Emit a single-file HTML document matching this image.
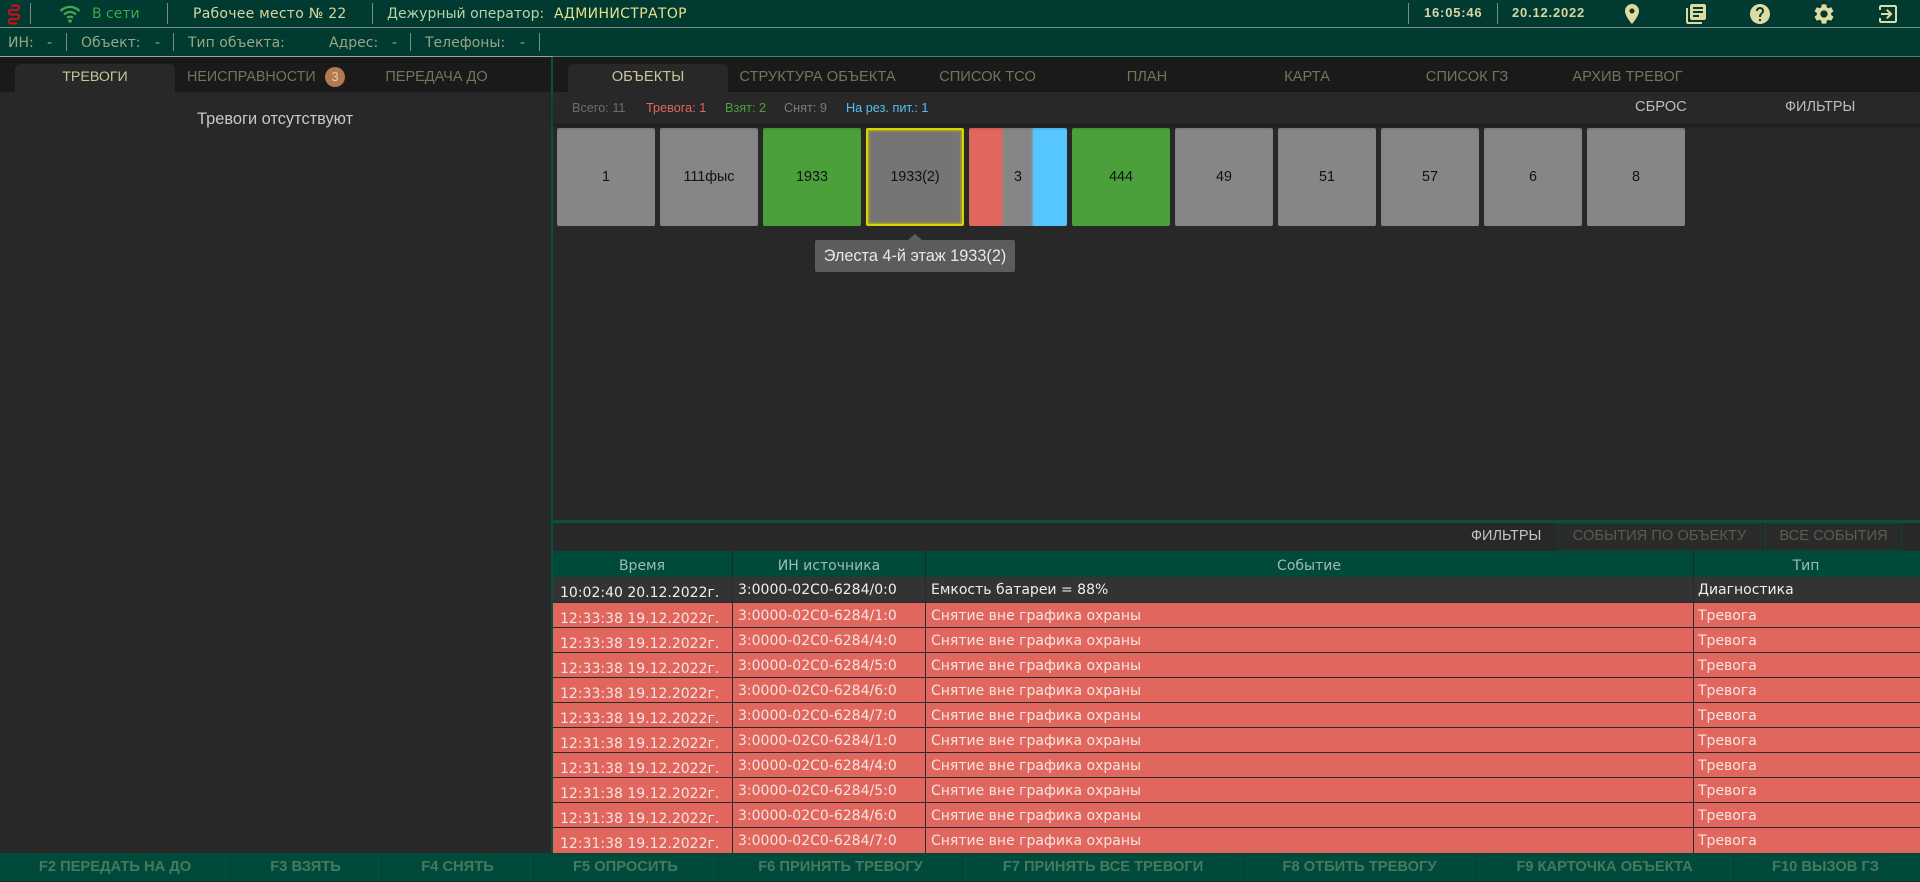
<!DOCTYPE html>
<html lang="ru"><head><meta charset="utf-8"><title>Пульт</title>
<style>
*{box-sizing:border-box}
html,body{margin:0;padding:0;width:1920px;height:882px;overflow:hidden;background:#282828;font-family:"Liberation Sans",sans-serif}
.a{position:absolute;white-space:nowrap}
.c{position:absolute;white-space:nowrap;transform:translateX(-50%)}
.b{position:absolute}
.d{font-family:"DejaVu Sans",sans-serif;font-size:14px}
.sep{position:absolute;width:1px;background:#7f8a80}
.t1{top:3px;height:21px}.t2{top:33px;height:18px}
.h{top:4px;line-height:20px;color:#d8d6a2}
.r2{top:34px;line-height:18px;color:#98a684}
.tab{top:65px;line-height:25px;font-size:14.700px;color:#77735a;height:27px}
.tile{position:absolute;top:128px;width:98px;height:98px;background:#868686;border-radius:2px;color:#111;font-size:14.300px;line-height:99px;text-align:center;box-shadow:inset 0 2px 2px -1px rgba(0,0,0,.15)}
.g{background:#4ca03c}
.st{top:101px;font-size:12.700px;line-height:14px}
.row{position:absolute;left:553px;width:1367px;height:25px;background:#e0665e;border-bottom:1px solid #2a2a2a;color:#f6e4e0}
.row span{position:absolute;white-space:nowrap;line-height:24px;top:1px}
.row .t{left:7px;top:4px}.row .i{left:185px}.row .e{left:378px}.row .y{left:1145px}
.row i{position:absolute;top:0;bottom:-1px;width:1px;background:#2a2a2a}
.fk{position:absolute;top:854px;height:27px;line-height:27px;font-size:14.700px;font-weight:bold;color:#457a5f;white-space:nowrap;transform:translateX(-50%)}
.fs{position:absolute;top:853px;width:1px;height:28px;background:#003f32}
</style></head><body>
<!-- top bars -->
<div class="b" style="left:0;top:0;width:1920px;height:27px;background:#003a30"></div>
<div class="b" style="left:0;top:27px;width:1920px;height:1px;background:#7f8f84"></div>
<div class="b" style="left:0;top:28px;width:1920px;height:28px;background:#003a30"></div>
<div class="b" style="left:0;top:56px;width:1920px;height:1px;background:#9aa5a0"></div>
<svg class="b" style="left:7px;top:2px" width="14" height="24" viewBox="0 0 14 24"><path d="M4 3.500h6c2.700 0 2.700 4.500 0 4.500H4c-2.700 0-2.700 4.500 0 4.500h6c2.700 0 2.700 4.500 0 4.500H4c-2.700 0-2.700 4.500 0 4.500h6" fill="none" stroke="#c4121c" stroke-width="2.200"/></svg>
<div class="sep t1" style="left:30px"></div>
<svg class="b" style="left:58px;top:3px" width="24" height="20" viewBox="0 0 24 20"><path d="M2.500 8C8 2.500 16 2.500 21.500 8M6 11.500c3.500-3.300 8.500-3.300 12 0M9 14.800c1.800-1.500 4.200-1.500 6 0" fill="none" stroke="#45a84e" stroke-width="2.300"/><circle cx="12" cy="18" r="1.800" fill="#45a84e"/></svg>
<div class="a d h" style="left:92px;color:#3fa64a">В сети</div>
<div class="sep t1" style="left:167px"></div>
<div class="a d h" style="left:193px;letter-spacing:.25px">Рабочее место № 22</div>
<div class="sep t1" style="left:372px"></div>
<div class="a d h" style="left:387px;color:#b9d2a8">Дежурный оператор:</div>
<div class="a d h" style="left:554px;color:#e6e08c;letter-spacing:.35px">АДМИНИСТРАТОР</div>
<div class="sep t1" style="left:1408px"></div>
<div class="a h" style="left:1424px;top:3px;font:bold 13px/19px 'Liberation Sans',sans-serif;letter-spacing:.8px;color:#d8d6a2">16:05:46</div>
<div class="sep t1" style="left:1497px"></div>
<div class="a h" style="left:1512px;top:3px;font:bold 13px/19px 'Liberation Sans',sans-serif;letter-spacing:.8px;color:#d8d6a2">20.12.2022</div>
<svg class="b" style="left:1620px;top:2px" width="24" height="24" viewBox="0 0 24 24" fill="#dfdba0"><path d="M12 2C8.130 2 5 5.130 5 9c0 5.250 7 13 7 13s7-7.750 7-13c0-3.870-3.130-7-7-7zm0 9.500c-1.380 0-2.500-1.120-2.500-2.500s1.120-2.500 2.500-2.500 2.500 1.120 2.500 2.500-1.120 2.500-2.500 2.500z"/></svg>
<svg class="b" style="left:1684px;top:2px" width="24" height="24" viewBox="0 0 24 24" fill="#dfdba0"><path d="M4 6H2v14c0 1.100.9 2 2 2h14v-2H4V6zm16-4H8c-1.100 0-2 .9-2 2v12c0 1.100.9 2 2 2h12c1.100 0 2-.9 2-2V4c0-1.100-.9-2-2-2zm-1 9H9V9h10v2zm-4 4H9v-2h6v2zm4-8H9V5h10v2z"/></svg>
<svg class="b" style="left:1748px;top:2px" width="24" height="24" viewBox="0 0 24 24" fill="#dfdba0"><path d="M12 2C6.480 2 2 6.480 2 12s4.480 10 10 10 10-4.480 10-10S17.520 2 12 2zm1 17h-2v-2h2v2zm2.070-7.750l-.9.920C13.450 12.900 13 13.500 13 15h-2v-.5c0-1.100.45-2.100 1.170-2.830l1.240-1.260c.37-.36.59-.86.59-1.410 0-1.100-.9-2-2-2s-2 .9-2 2H8c0-2.210 1.790-4 4-4s4 1.790 4 4c0 .88-.36 1.680-.93 2.250z"/></svg>
<svg class="b" style="left:1812px;top:2px" width="24" height="24" viewBox="0 0 24 24" fill="#dfdba0"><path d="M19.140 12.940c.04-.3.060-.61.060-.94 0-.32-.02-.64-.07-.94l2.030-1.580c.18-.14.23-.41.12-.61l-1.920-3.320c-.12-.22-.37-.29-.59-.22l-2.390.96c-.5-.38-1.030-.7-1.620-.94l-.36-2.540c-.04-.24-.24-.41-.48-.41h-3.840c-.24 0-.43.17-.47.41l-.36 2.540c-.59.24-1.130.57-1.620.94l-2.390-.96c-.22-.08-.47 0-.59.22L2.740 8.870c-.12.21-.08.47.12.61l2.030 1.580c-.05.3-.09.63-.09.94s.02.64.07.94l-2.030 1.580c-.18.14-.23.41-.12.61l1.920 3.320c.12.22.37.29.59.22l2.390-.96c.5.38 1.030.7 1.620.94l.36 2.540c.05.24.24.41.48.41h3.840c.24 0 .44-.17.47-.41l.36-2.540c.59-.24 1.130-.56 1.620-.94l2.390.96c.22.08.47 0 .59-.22l1.920-3.320c.12-.22.07-.47-.12-.61l-2.010-1.580zM12 15.600c-1.980 0-3.600-1.620-3.600-3.600s1.620-3.600 3.600-3.600 3.600 1.620 3.600 3.600-1.620 3.600-3.600 3.600z"/></svg>
<svg class="b" style="left:1876px;top:2px" width="24" height="24" viewBox="0 0 24 24" fill="#dfdba0"><path d="M10.090 15.590L11.500 17l5-5-5-5-1.410 1.410L12.670 11H5v2h7.670l-2.580 2.590zM19 3H5c-1.110 0-2 .9-2 2v3h2V5h14v14H5v-3H3v3c0 1.100.89 2 2 2h14c1.100 0 2-.9 2-2V5c0-1.100-.9-2-2-2z"/></svg>
<!-- row 2 -->
<div class="a d r2" style="left:8px">ИН:</div><div class="a d r2" style="left:47px">-</div><div class="sep t2" style="left:66px"></div>
<div class="a d r2" style="left:81px">Объект:</div><div class="a d r2" style="left:155px">-</div><div class="sep t2" style="left:173px"></div>
<div class="a d r2" style="left:188px">Тип объекта:</div>
<div class="a d r2" style="left:329px">Адрес:</div><div class="a d r2" style="left:392px">-</div><div class="sep t2" style="left:410px"></div>
<div class="a d r2" style="left:425px">Телефоны:</div><div class="a d r2" style="left:520px">-</div><div class="sep t2" style="left:539px"></div>
<!-- tab strips -->
<div class="b" style="left:0;top:57px;width:1920px;height:35px;background:#1a1a1a"></div>
<div class="b" style="left:0;top:92px;width:551px;height:761px;background:#282828"></div>
<div class="b" style="left:551px;top:57px;width:2px;height:796px;background:#07513f"></div>
<div class="b" style="left:553px;top:56px;width:1367px;height:1px;background:#3f8a78"></div>
<div class="b" style="left:15px;top:64px;width:160px;height:28px;background:#282828;border-radius:6px 6px 0 0"></div>
<div class="b" style="left:568px;top:64px;width:160px;height:28px;background:#282828;border-radius:6px 6px 0 0"></div>
<div class="c tab" style="left:95px;color:#c9c59a;font-size:14.200px">ТРЕВОГИ</div>
<div class="a tab" style="left:187px;font-size:14.300px">НЕИСПРАВНОСТИ</div>
<div class="b" style="left:325px;top:67px;width:20px;height:20px;border-radius:50%;background:#b5794e;color:#e4cfae;font-size:13px;line-height:20px;text-align:center">3</div>
<div class="c tab" style="left:436.500px;font-size:14.500px">ПЕРЕДАЧА ДО</div>
<div class="a" style="left:197px;top:110px;font-size:16.400px;line-height:19px;color:#c8c8c8">Тревоги отсутствуют</div>
<div class="c tab" style="left:648px;color:#c9c59a">ОБЪЕКТЫ</div>
<div class="c tab" style="left:817.500px">СТРУКТУРА ОБЪЕКТА</div>
<div class="c tab" style="left:987.500px">СПИСОК ТСО</div>
<div class="c tab" style="left:1147px">ПЛАН</div>
<div class="c tab" style="left:1307px">КАРТА</div>
<div class="c tab" style="left:1467px">СПИСОК ГЗ</div>
<div class="c tab" style="left:1627.500px">АРХИВ ТРЕВОГ</div>
<!-- stats bar -->
<div class="b" style="left:553px;top:92px;width:1367px;height:32px;background:#282828;box-shadow:0 2px 4px rgba(0,0,0,.35)"></div>
<div class="a st" style="left:572px;color:#6e6e6e">Всего: 11</div>
<div class="a st" style="left:646px;color:#e0665e">Тревога: 1</div>
<div class="a st" style="left:725px;color:#4ca03c">Взят: 2</div>
<div class="a st" style="left:784px;color:#7c7c7c">Снят: 9</div>
<div class="a st" style="left:846px;color:#55c0f5">На рез. пит.: 1</div>
<div class="a" style="left:1635px;top:98px;font-size:14.700px;line-height:19px;color:#bdbdbd">СБРОС</div>
<div class="a" style="left:1785px;top:98px;font-size:14.500px;line-height:19px;color:#bdbdbd">ФИЛЬТРЫ</div>
<!-- tiles -->
<div class="tile" style="left:557px">1</div>
<div class="tile" style="left:660px">111фыс</div>
<div class="tile g" style="left:763px">1933</div>
<div class="tile" style="left:866px;background:#757575;border:2px solid #dcd400;line-height:95px;box-shadow:inset 0 0 2px 1px #b5ae10">1933(2)</div>
<div class="tile" style="left:969px;background:linear-gradient(90deg,#e0665e 0,#e0665e 32px,#868686 35px,#868686 62px,#55c6ff 65px,#55c6ff 98px)">3</div>
<div class="tile g" style="left:1072px">444</div>
<div class="tile" style="left:1175px">49</div>
<div class="tile" style="left:1278px">51</div>
<div class="tile" style="left:1381px">57</div>
<div class="tile" style="left:1484px">6</div>
<div class="tile" style="left:1587px">8</div>
<!-- tooltip -->
<div class="b" style="left:908px;top:234px;width:0;height:0;border:7px solid transparent;border-top:0;border-bottom:6px solid #5c5c5c"></div>
<div class="b" style="left:815px;top:240px;width:200px;height:32px;background:#5c5c5c;border-radius:2px;color:#e8e8e8;font-size:16.300px;line-height:33px;text-align:center;white-space:nowrap">Элеста 4-й этаж 1933(2)</div>
<!-- lower part -->
<div class="b" style="left:553px;top:520px;width:1367px;height:3px;background:#07513f"></div>
<div class="a" style="left:1471px;top:527px;font-size:14.500px;line-height:18px;color:#c4c4c4">ФИЛЬТРЫ</div>
<div class="b" style="left:1557px;top:523px;width:205px;height:28px;background:#2a2a2a;box-shadow:inset 0 0 4px #0b4a3b;color:#5d5b4c;font-size:14.700px;line-height:26px;text-align:center">СОБЫТИЯ ПО ОБЪЕКТУ</div>
<div class="b" style="left:1764px;top:523px;width:139px;height:28px;background:#2a2a2a;box-shadow:inset 0 0 4px #0b4a3b;color:#5d5b4c;font-size:14.700px;line-height:26px;text-align:center">ВСЕ СОБЫТИЯ</div>
<!-- table head -->
<div class="b" style="left:553px;top:551px;width:1367px;height:26px;background:#004a3c"></div>
<div class="b" style="left:732px;top:551px;width:1px;height:26px;background:#1f2a26"></div>
<div class="b" style="left:925px;top:551px;width:1px;height:26px;background:#1f2a26"></div>
<div class="b" style="left:1693px;top:551px;width:1px;height:26px;background:#1f2a26"></div>
<div class="c d" style="left:642px;top:557px;line-height:19px;color:#9dbcb0">Время</div>
<div class="c d" style="left:829px;top:557px;line-height:19px;color:#9dbcb0">ИН источника</div>
<div class="c d" style="left:1309px;top:557px;line-height:19px;color:#9dbcb0">Событие</div>
<div class="c d" style="left:1806px;top:557px;line-height:19px;color:#9dbcb0">Тип</div>
<!-- rows -->
<div class="row d" style="top:577px;height:26px;background:#333;color:#efefef"><i style="left:179px"></i><i style="left:372px"></i><i style="left:1140px"></i><span class="t">10:02:40 20.12.2022г.</span><span class="i">3:0000-02C0-6284/0:0</span><span class="e">Емкость батареи = 88%</span><span class="y">Диагностика</span></div>
<div class="row d" style="top:603px"><i style="left:179px"></i><i style="left:372px"></i><i style="left:1140px"></i><span class="t">12:33:38 19.12.2022г.</span><span class="i">3:0000-02C0-6284/1:0</span><span class="e">Снятие вне графика охраны</span><span class="y">Тревога</span></div>
<div class="row d" style="top:628px"><i style="left:179px"></i><i style="left:372px"></i><i style="left:1140px"></i><span class="t">12:33:38 19.12.2022г.</span><span class="i">3:0000-02C0-6284/4:0</span><span class="e">Снятие вне графика охраны</span><span class="y">Тревога</span></div>
<div class="row d" style="top:653px"><i style="left:179px"></i><i style="left:372px"></i><i style="left:1140px"></i><span class="t">12:33:38 19.12.2022г.</span><span class="i">3:0000-02C0-6284/5:0</span><span class="e">Снятие вне графика охраны</span><span class="y">Тревога</span></div>
<div class="row d" style="top:678px"><i style="left:179px"></i><i style="left:372px"></i><i style="left:1140px"></i><span class="t">12:33:38 19.12.2022г.</span><span class="i">3:0000-02C0-6284/6:0</span><span class="e">Снятие вне графика охраны</span><span class="y">Тревога</span></div>
<div class="row d" style="top:703px"><i style="left:179px"></i><i style="left:372px"></i><i style="left:1140px"></i><span class="t">12:33:38 19.12.2022г.</span><span class="i">3:0000-02C0-6284/7:0</span><span class="e">Снятие вне графика охраны</span><span class="y">Тревога</span></div>
<div class="row d" style="top:728px"><i style="left:179px"></i><i style="left:372px"></i><i style="left:1140px"></i><span class="t">12:31:38 19.12.2022г.</span><span class="i">3:0000-02C0-6284/1:0</span><span class="e">Снятие вне графика охраны</span><span class="y">Тревога</span></div>
<div class="row d" style="top:753px"><i style="left:179px"></i><i style="left:372px"></i><i style="left:1140px"></i><span class="t">12:31:38 19.12.2022г.</span><span class="i">3:0000-02C0-6284/4:0</span><span class="e">Снятие вне графика охраны</span><span class="y">Тревога</span></div>
<div class="row d" style="top:778px"><i style="left:179px"></i><i style="left:372px"></i><i style="left:1140px"></i><span class="t">12:31:38 19.12.2022г.</span><span class="i">3:0000-02C0-6284/5:0</span><span class="e">Снятие вне графика охраны</span><span class="y">Тревога</span></div>
<div class="row d" style="top:803px"><i style="left:179px"></i><i style="left:372px"></i><i style="left:1140px"></i><span class="t">12:31:38 19.12.2022г.</span><span class="i">3:0000-02C0-6284/6:0</span><span class="e">Снятие вне графика охраны</span><span class="y">Тревога</span></div>
<div class="row d" style="top:828px;height:25px;border-bottom:0"><i style="left:179px"></i><i style="left:372px"></i><i style="left:1140px"></i><span class="t">12:31:38 19.12.2022г.</span><span class="i">3:0000-02C0-6284/7:0</span><span class="e">Снятие вне графика охраны</span><span class="y">Тревога</span></div>
<!-- footer -->
<div class="b" style="left:0;top:853px;width:1920px;height:29px;background:#004a3c;border-bottom:1px solid #1b2a26"></div>
<div class="fs" style="left:230px"></div><div class="fs" style="left:381px"></div><div class="fs" style="left:533px"></div><div class="fs" style="left:718px"></div><div class="fs" style="left:962px"></div><div class="fs" style="left:1243px"></div><div class="fs" style="left:1476px"></div><div class="fs" style="left:1733px"></div>
<div class="fk" style="left:115px">F2 ПЕРЕДАТЬ НА ДО</div>
<div class="fk" style="left:305.500px">F3 ВЗЯТЬ</div>
<div class="fk" style="left:457.500px">F4 СНЯТЬ</div>
<div class="fk" style="left:625.500px">F5 ОПРОСИТЬ</div>
<div class="fk" style="left:840.500px">F6 ПРИНЯТЬ ТРЕВОГУ</div>
<div class="fk" style="left:1103px">F7 ПРИНЯТЬ ВСЕ ТРЕВОГИ</div>
<div class="fk" style="left:1359.500px">F8 ОТБИТЬ ТРЕВОГУ</div>
<div class="fk" style="left:1604.500px">F9 КАРТОЧКА ОБЪЕКТА</div>
<div class="fk" style="left:1825.500px">F10 ВЫЗОВ ГЗ</div>
</body></html>
